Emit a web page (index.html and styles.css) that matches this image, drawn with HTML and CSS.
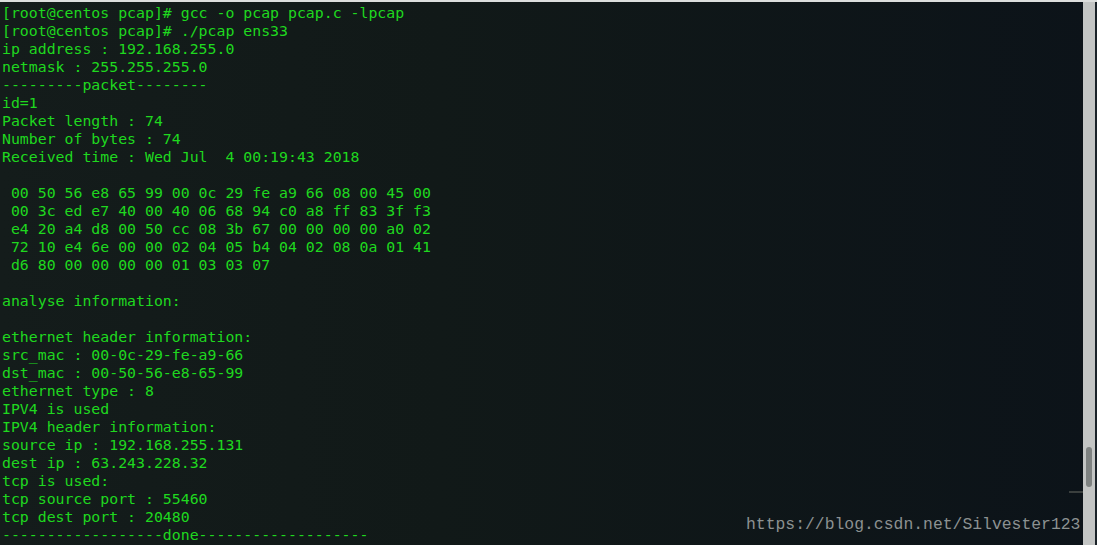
FILE: index.html
```html
<!DOCTYPE html>
<html>

<head>
	<title>Terminal - pcap</title>
	<meta charset="UTF-8" />
	<link rel="stylesheet" href="styles.css">
</head>

<body>

<div class="window">
	<div class="topbar"></div>
	<div class="main">
		<pre class="terminal">[root@centos pcap]# gcc -o pcap pcap.c -lpcap
[root@centos pcap]# ./pcap ens33
ip address : 192.168.255.0
netmask : 255.255.255.0
---------packet--------
id=1
Packet length : 74
Number of bytes : 74
Received time : Wed Jul  4 00:19:43 2018

 00 50 56 e8 65 99 00 0c 29 fe a9 66 08 00 45 00
 00 3c ed e7 40 00 40 06 68 94 c0 a8 ff 83 3f f3
 e4 20 a4 d8 00 50 cc 08 3b 67 00 00 00 00 a0 02
 72 10 e4 6e 00 00 02 04 05 b4 04 02 08 0a 01 41
 d6 80 00 00 00 00 01 03 03 07

analyse information:

ethernet header information:
src_mac : 00-0c-29-fe-a9-66
dst_mac : 00-50-56-e8-65-99
ethernet type : 8
IPV4 is used
IPV4 header information:
source ip : 192.168.255.131
dest ip : 63.243.228.32
tcp is used:
tcp source port : 55460
tcp dest port : 20480
------------------done-------------------</pre>
		<span class="corner-line"></span>
		<div class="scrollbar">
			<div class="thumb"></div>
		</div>
		<div class="edge"></div>
		<span class="watermark">https://blog.csdn.net/Silvester123</span>
	</div>
</div>

</body>

</html>
```

FILE: styles.css
```css
html, body {
  margin: 0;
  padding: 0;
  background: #0d1419;
}

.window {
  width: 1097px;
  height: 545px;
  display: flex;
  flex-direction: column;
  overflow: hidden;
}

.topbar {
  height: 2px;
  background: #dcdedd;
}

.main {
  position: relative;
  flex: 1;
  display: flex;
  background: linear-gradient(to right, #141c1b 0%, #111918 40%, #0c1319 100%);
}

.terminal {
  flex: 1;
  margin: 0;
  padding: 2px 0 0 2px;
  font-family: "DejaVu Sans Mono", monospace;
  font-size: 14.85px;
  line-height: 18px;
  color: #1fd81f;
  white-space: pre;
  overflow: hidden;
}

.scrollbar {
  width: 12px;
  background: #c3c5c4;
  position: relative;
  z-index: 1;
}

.thumb {
  position: absolute;
  left: 3px;
  top: 445px;
  width: 6px;
  height: 40px;
  border-radius: 3px;
  background: #7e8281;
}

.edge {
  width: 2px;
  background: #1a2228;
  z-index: 1;
}

.corner-line {
  position: absolute;
  right: 14px;
  top: 489px;
  width: 14px;
  height: 2px;
  background: #3a3f3e;
}

.watermark {
  position: absolute;
  left: 746px;
  top: 513px;
  font-family: "Liberation Mono", monospace;
  font-size: 16.4px;
  line-height: 20px;
  color: #8c9191;
  white-space: nowrap;
}
```
